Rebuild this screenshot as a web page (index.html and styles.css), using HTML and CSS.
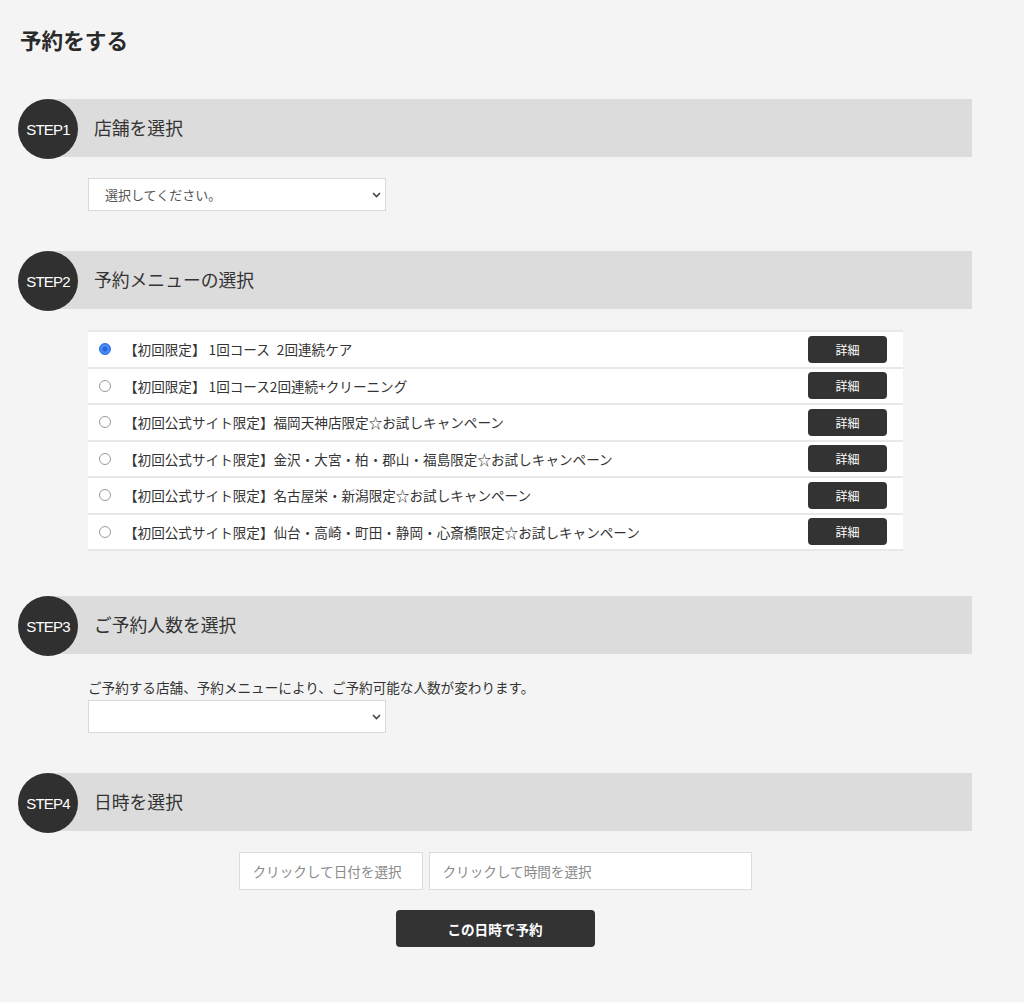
FILE: index.html
```html
<!DOCTYPE html>
<html lang="ja">
<head>
<meta charset="utf-8">
<title>予約をする</title>
<link rel="stylesheet" href="styles.css">
</head>
<body>
<div class="page">
  <h1 class="title">予約をする</h1>

  <section class="step step-1">
    <div class="step-head">
      <div class="step-num">STEP1</div>
      <h2 class="step-title">店舗を選択</h2>
    </div>
    <div class="step-body body-1">
      <div class="select-wrap">
        <select class="select"><option>選択してください。</option></select>
        <svg class="chev" width="9" height="6" viewBox="0 0 9 6"><path d="M1 1l3.5 3.5L8 1" fill="none" stroke="#444" stroke-width="1.6"/></svg>
      </div>
    </div>
  </section>

  <section class="step step-2">
    <div class="step-head">
      <div class="step-num">STEP2</div>
      <h2 class="step-title">予約メニューの選択</h2>
    </div>
    <div class="step-body body-2">
      <ul class="menu-list">
        <li class="menu-row"><input type="radio" name="menu" class="radio" checked><span class="menu-text">【初回限定】 1回コース<span class="wide-gap"> </span>2回連続ケア</span><button class="detail-btn">詳細</button></li>
        <li class="menu-row"><input type="radio" name="menu" class="radio"><span class="menu-text">【初回限定】 1回コース2回連続+クリーニング</span><button class="detail-btn">詳細</button></li>
        <li class="menu-row"><input type="radio" name="menu" class="radio"><span class="menu-text">【初回公式サイト限定】福岡天神店限定☆お試しキャンペーン</span><button class="detail-btn">詳細</button></li>
        <li class="menu-row"><input type="radio" name="menu" class="radio"><span class="menu-text">【初回公式サイト限定】金沢・大宮・柏・郡山・福島限定☆お試しキャンペーン</span><button class="detail-btn">詳細</button></li>
        <li class="menu-row"><input type="radio" name="menu" class="radio"><span class="menu-text">【初回公式サイト限定】名古屋栄・新潟限定☆お試しキャンペーン</span><button class="detail-btn">詳細</button></li>
        <li class="menu-row"><input type="radio" name="menu" class="radio"><span class="menu-text">【初回公式サイト限定】仙台・高崎・町田・静岡・心斎橋限定☆お試しキャンペーン</span><button class="detail-btn">詳細</button></li>
      </ul>
    </div>
  </section>

  <section class="step step-3">
    <div class="step-head">
      <div class="step-num">STEP3</div>
      <h2 class="step-title">ご予約人数を選択</h2>
    </div>
    <div class="step-body body-3">
      <p class="note">ご予約する店舗、予約メニューにより、ご予約可能な人数が変わります。</p>
      <div class="select-wrap">
        <select class="select"><option></option></select>
        <svg class="chev" width="9" height="6" viewBox="0 0 9 6"><path d="M1 1l3.5 3.5L8 1" fill="none" stroke="#444" stroke-width="1.6"/></svg>
      </div>
    </div>
  </section>

  <section class="step step-4">
    <div class="step-head">
      <div class="step-num">STEP4</div>
      <h2 class="step-title">日時を選択</h2>
    </div>
    <div class="step-body body-4">
      <div class="datetime">
        <input class="field field-date" type="text" placeholder="クリックして日付を選択">
        <input class="field field-time" type="text" placeholder="クリックして時間を選択">
      </div>
      <button class="submit-btn">この日時で予約</button>
    </div>
  </section>
</div>
</body>
</html>
```

FILE: styles.css
```css
* { box-sizing: border-box; }

html, body {
  margin: 0;
  padding: 0;
  background: #f4f4f4;
}

body {
  font-family: "Noto Sans CJK JP", "Noto Sans", sans-serif;
  color: #333;
}

.page {
  width: 954px;
  margin-left: 18px;
  padding-bottom: 40px;
}

.title {
  margin: 0;
  padding: 24px 0 0 2px;
  font-size: 21.6px;
  line-height: 32px;
  font-weight: 700;
  color: #2a2a2a;
}

.step-1 { margin-top: 43px; }
.step-2 { margin-top: 40px; }
.step-3 { margin-top: 45px; }
.step-4 { margin-top: 40px; }

.step-head {
  display: flex;
  align-items: center;
  height: 58px;
  margin-left: 30px;
  background: #dcdcdc;
}

.step-num {
  flex-shrink: 0;
  width: 60px;
  height: 60px;
  margin-left: -30px;
  margin-top: 2px;
  border-radius: 50%;
  background: #303030;
  color: #fff;
  display: flex;
  align-items: center;
  justify-content: center;
  font-family: "Liberation Sans", Arial, sans-serif;
  font-size: 15px;
  letter-spacing: -0.8px;
}

.step-title {
  margin: 0 0 0 16px;
  font-size: 17.8px;
  font-weight: 400;
  color: #333;
  line-height: 1;
}

.step-body {
  margin-left: 70px;
}

.body-1 { margin-top: 21px; }
.body-2 { margin-top: 21px; }
.body-3 { margin-top: 23px; }
.body-4 {
  margin-top: 21px;
  margin-left: 0;
  display: flex;
  flex-direction: column;
  align-items: center;
}

.select-wrap {
  position: relative;
  width: 298px;
  height: 33px;
}

.select {
  appearance: none;
  -webkit-appearance: none;
  width: 100%;
  height: 100%;
  margin: 0;
  padding: 0 30px 0 16px;
  background: #fff;
  border: 1px solid #d9d9d9;
  border-radius: 0;
  font-family: "Noto Sans CJK JP", sans-serif;
  font-size: 13px;
  color: #555;
}

.chev {
  position: absolute;
  right: 5px;
  top: 14px;
  pointer-events: none;
}

.menu-list {
  list-style: none;
  margin: 0;
  padding: 0;
  width: 815px;
  background: #fff;
  border-top: 2px solid #e8e8e8;
}

.menu-row {
  display: flex;
  align-items: center;
  height: 36.5px;
  padding: 0 16px 0 11px;
  border-bottom: 2px solid #e8e8e8;
}

.radio {
  appearance: none;
  -webkit-appearance: none;
  flex-shrink: 0;
  width: 12px;
  height: 12px;
  margin: 0;
  border: 1px solid #9a9a9a;
  border-radius: 50%;
  background: #fff;
}

.radio:checked {
  border-color: #2f74e8;
  background: #2767dc;
  box-shadow: inset 0 0 0 2.5px #4a8cf5;
}

.menu-text {
  flex: 1;
  margin-left: 13px;
  font-size: 13.6px;
  color: #333;
  white-space: nowrap;
}

.wide-gap {
  display: inline-block;
  width: 7px;
}

.detail-btn {
  width: 79px;
  height: 27px;
  border: none;
  border-radius: 4px;
  background: #333;
  color: #fff;
  font-family: "Noto Sans CJK JP", sans-serif;
  font-size: 12px;
  padding: 0;
}

.note {
  margin: 0;
  font-size: 13.6px;
  line-height: 20px;
  color: #333;
}

.body-3 .select-wrap { margin-top: 3px; }

.datetime {
  display: flex;
  gap: 6px;
}

.field {
  height: 38px;
  margin: 0;
  padding: 0 0 0 13px;
  background: #fff;
  border: 1px solid #dcdcdc;
  border-radius: 0;
  font-family: "Noto Sans CJK JP", sans-serif;
  font-size: 13.6px;
  color: #333;
  outline: none;
}

.field::placeholder { color: #8a8a8a; }

.field-date { width: 184px; }
.field-time { width: 323px; }

.submit-btn {
  margin-top: 20px;
  width: 199px;
  height: 37px;
  border: none;
  border-radius: 4px;
  background: #333;
  color: #fff;
  font-family: "Noto Sans CJK JP", sans-serif;
  font-size: 13.6px;
  font-weight: 700;
}
```
